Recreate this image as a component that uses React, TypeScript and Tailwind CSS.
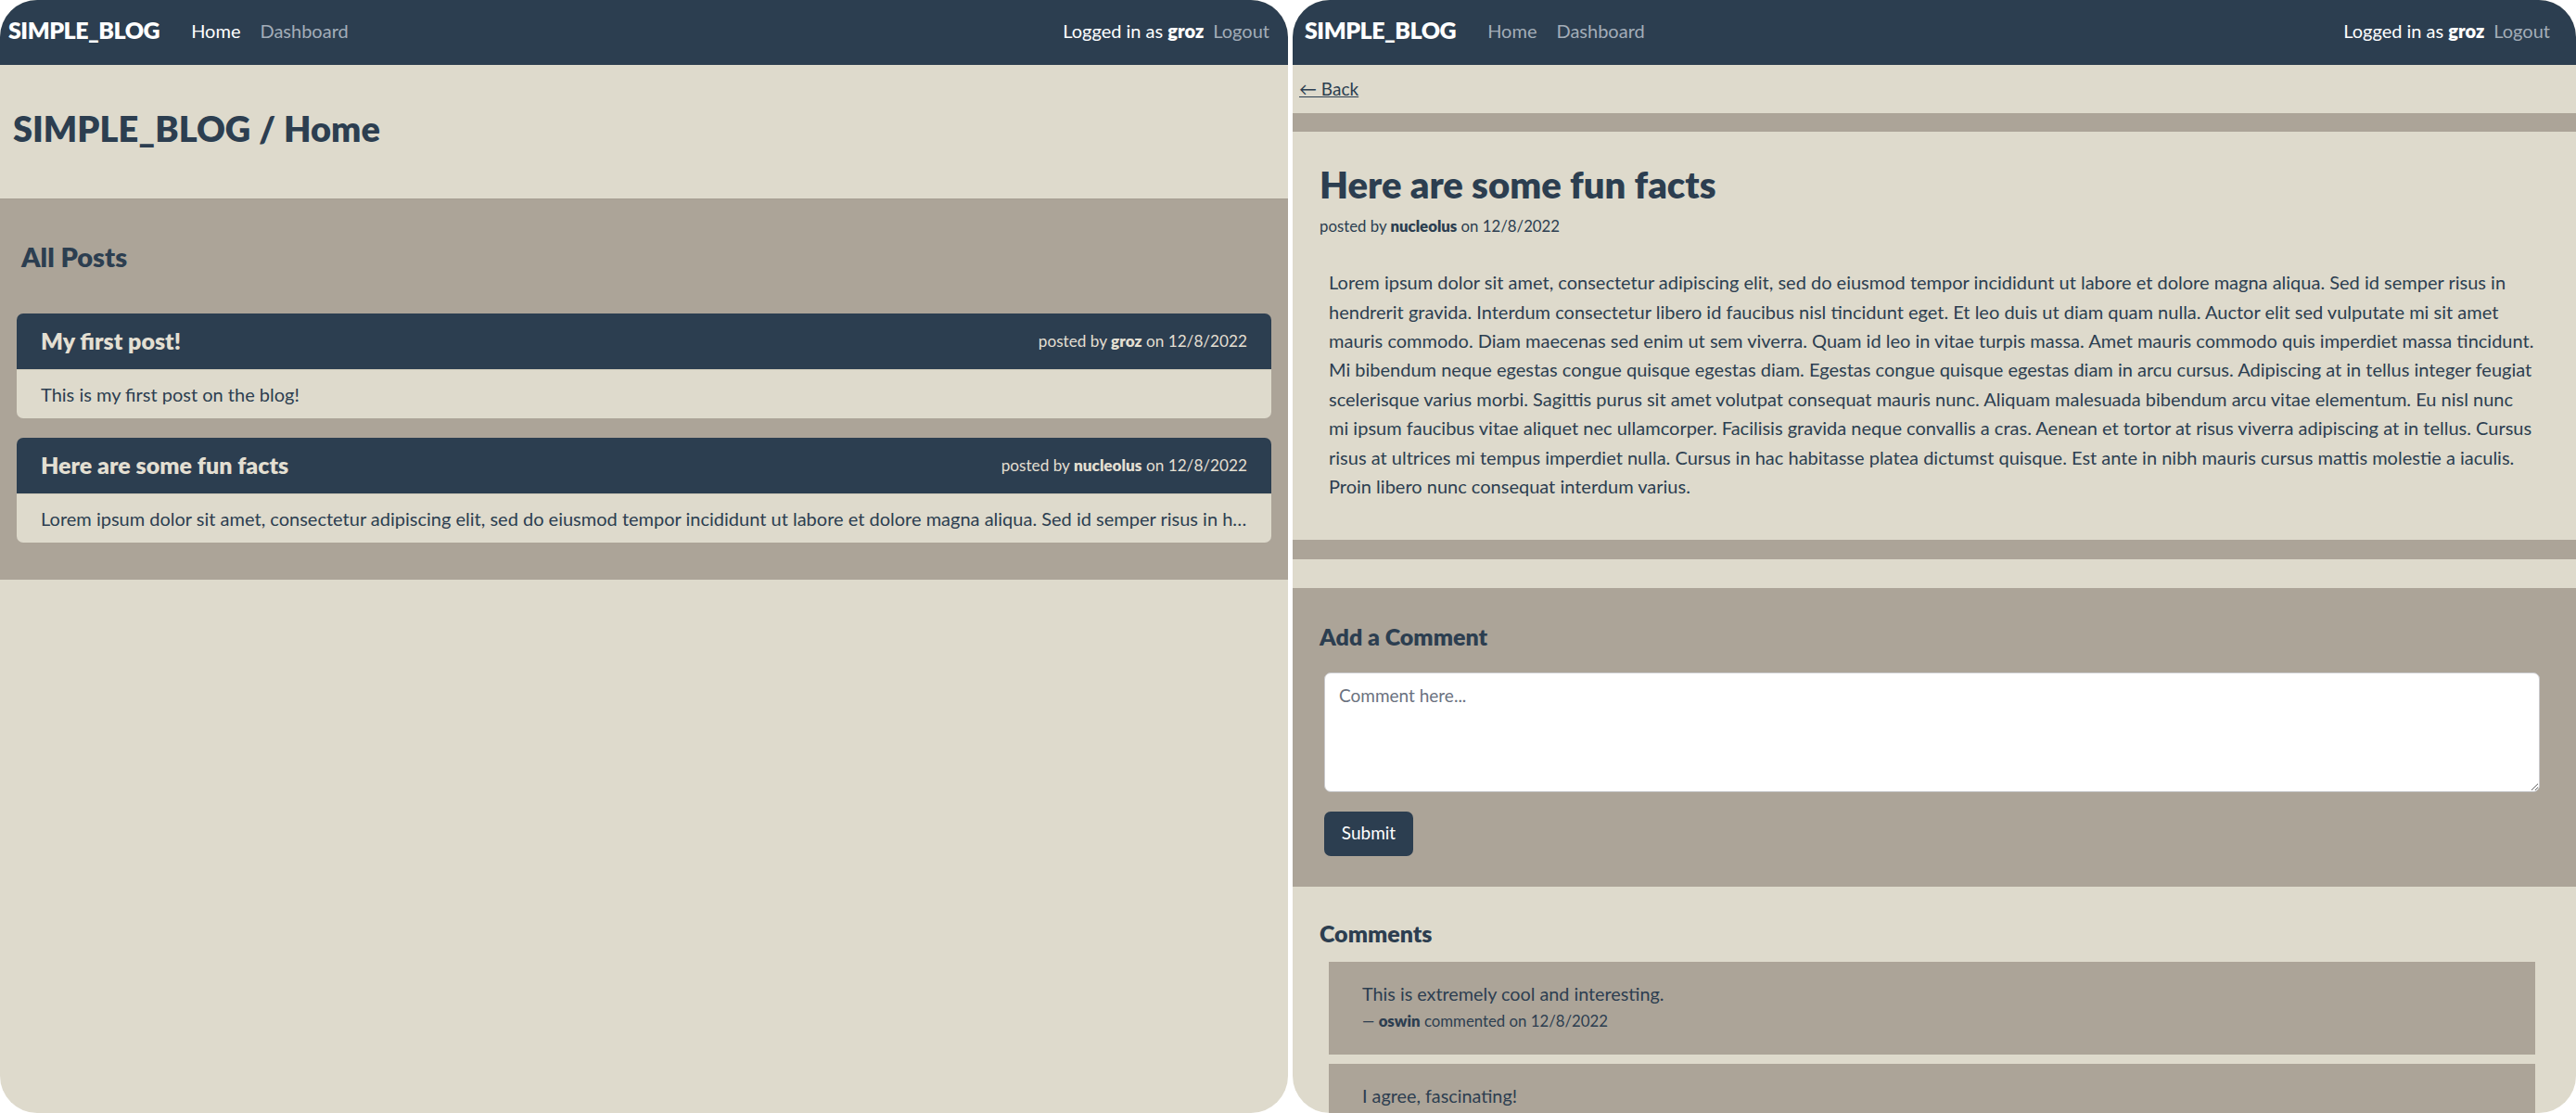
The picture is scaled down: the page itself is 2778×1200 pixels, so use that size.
import React from 'react';

const LOREM =
  'Lorem ipsum dolor sit amet, consectetur adipiscing elit, sed do eiusmod tempor incididunt ut labore et dolore magna aliqua. Sed id semper risus in hendrerit gravida. Interdum consectetur libero id faucibus nisl tincidunt eget. Et leo duis ut diam quam nulla. Auctor elit sed vulputate mi sit amet mauris commodo. Diam maecenas sed enim ut sem viverra. Quam id leo in vitae turpis massa. Amet mauris commodo quis imperdiet massa tincidunt. Mi bibendum neque egestas congue quisque egestas diam. Egestas congue quisque egestas diam in arcu cursus. Adipiscing at in tellus integer feugiat scelerisque varius morbi. Sagittis purus sit amet volutpat consequat mauris nunc. Aliquam malesuada bibendum arcu vitae elementum. Eu nisl nunc mi ipsum faucibus vitae aliquet nec ullamcorper. Facilisis gravida neque convallis a cras. Aenean et tortor at risus viverra adipiscing at in tellus. Cursus risus at ultrices mi tempus imperdiet nulla. Cursus in hac habitasse platea dictumst quisque. Est ante in nibh mauris cursus mattis molestie a iaculis. Proin libero nunc consequat interdum varius.';

const posts = [
  { id: 1, title: 'My first post!', author: 'groz', date: '12/8/2022', body: 'This is my first post on the blog!' },
  { id: 2, title: 'Here are some fun facts', author: 'nucleolus', date: '12/8/2022', body: LOREM },
];

const comments = [
  { id: 1, text: 'This is extremely cool and interesting.', author: 'oswin', date: '12/8/2022' },
  { id: 2, text: 'I agree, fascinating!', author: 'groz', date: '12/8/2022' },
];

const Navbar: React.FC<{ active?: string; className?: string }> = ({ active, className }) => (
  <nav className={`h-[70px] shrink-0 bg-[#2c3e50] flex items-center justify-between pb-[5px] ${className}`}>
    <div className="flex items-center">
      <span className="text-white font-extrabold text-[25px] tracking-[-0.5px] mr-[34px]">SIMPLE_BLOG</span>
      <a className={`text-[20px] mr-[21px] ${active === 'home' ? 'text-white' : 'text-[#a3adb8]'}`}>Home</a>
      <a className="text-[20px] text-[#a3adb8]">Dashboard</a>
    </div>
    <div className="flex items-center text-[20px]">
      <span className="text-white">
        Logged in as <b className="font-extrabold">groz</b>
      </span>
      <a className="ml-[10px] text-[#a3adb8]">Logout</a>
    </div>
  </nav>
);

const HomePanel = () => (
  <div className="w-[1389px] shrink-0 h-full rounded-[40px] overflow-hidden bg-[#dedacc] flex flex-col">
    <Navbar active="home" className="pl-[9px] pr-[20px]" />
    <header className="h-[144px] shrink-0 flex items-center px-[14px] pb-[8px]">
      <h1 className="text-[38px] font-extrabold text-[#2c3e50]">SIMPLE_BLOG / Home</h1>
    </header>
    <section className="shrink-0 bg-[#aca498] pt-[40px] pb-[40px] px-[18px] border-t border-[#a59d91]">
      <h2 className="text-[29px] font-extrabold text-[#2c3e50] pl-[5px] mb-[39px]">All Posts</h2>
      <div className="flex flex-col gap-[21px]">
        {posts.map(p => (
          <div key={p.id} className="rounded-[7px] overflow-hidden">
            <div className="h-[60px] bg-[#2c3e50] flex items-center justify-between gap-[40px] px-[26px]">
              <h3 className="text-[25px] font-extrabold text-[#e3dfd2]">{p.title}</h3>
              <span className="text-[17.2px] text-[#e3dfd2] whitespace-nowrap">
                posted by <b className="font-extrabold">{p.author}</b> on {p.date}
              </span>
            </div>
            <div className="h-[53px] bg-[#dedacc] flex items-center px-[26px] border-t border-[#cfcabb]">
              <p className="truncate text-[20px] text-[#2c3e50]">{p.body}</p>
            </div>
          </div>
        ))}
      </div>
    </section>
  </div>
);

const PostPanel = () => (
  <div className="flex-1 h-full rounded-[40px] overflow-hidden bg-[#dedacc] flex flex-col">
    <Navbar className="pl-[13px] pr-[28px]" />
    <div className="h-[52px] shrink-0 flex items-center px-[7px]">
      <a className="text-[19px] text-[#2c3e50] underline">← Back</a>
    </div>
    <div className="h-[20px] shrink-0 bg-[#aca498]" />
    <article className="h-[440px] shrink-0 pt-[33px] px-[29px]">
      <h1 className="text-[40px] font-extrabold text-[#2c3e50] leading-[1.2]">Here are some fun facts</h1>
      <p className="text-[16.8px] text-[#2c3e50] mt-[8px]">
        posted by <b className="font-extrabold">nucleolus</b> on 12/8/2022
      </p>
      <p className="mt-[33px] pl-[10px] pr-[16px] text-[20px] leading-[31.4px] text-[#2c3e50]">{LOREM}</p>
    </article>
    <div className="h-[21px] shrink-0 bg-[#aca498]" />
    <div className="h-[31px] shrink-0" />
    <section className="h-[322px] shrink-0 bg-[#aca498] pt-[34px] px-[29px]">
      <h2 className="text-[25px] font-extrabold text-[#2c3e50]">Add a Comment</h2>
      <div className="pl-[5px] pr-[10px] mt-[19px]">
        <textarea
          placeholder="Comment here..."
          className="block w-full h-[129px] bg-white rounded-[7px] border border-[#c9c9cc] px-[15px] py-[10px] text-[19px] text-[#2c3e50] placeholder:text-[#6b7280] outline-none"
        />
        <button className="mt-[21px] h-[48px] w-[96px] rounded-[7px] bg-[#2c3e50] text-white text-[19px]">Submit</button>
      </div>
    </section>
    <section className="shrink-0 pt-[32px] px-[29px]">
      <h2 className="text-[25px] font-extrabold text-[#2c3e50]">Comments</h2>
      <div className="pl-[10px] pr-[15px] mt-[11px] flex flex-col gap-[10px]">
        {comments.map(c => (
          <div key={c.id} className="h-[100px] bg-[#aca498] px-[36px] pt-[20px] text-[#2c3e50]">
            <p className="text-[19.8px]">{c.text}</p>
            <p className="text-[16.8px] mt-[2px]">
              — <b className="font-extrabold">{c.author}</b> commented on {c.date}
            </p>
          </div>
        ))}
      </div>
    </section>
  </div>
);

export default function App() {
  return (
    <div className="w-[2778px] h-[1200px] overflow-hidden bg-white flex gap-[5px] font-['Lato',sans-serif]">
      <HomePanel />
      <PostPanel />
    </div>
  );
}
